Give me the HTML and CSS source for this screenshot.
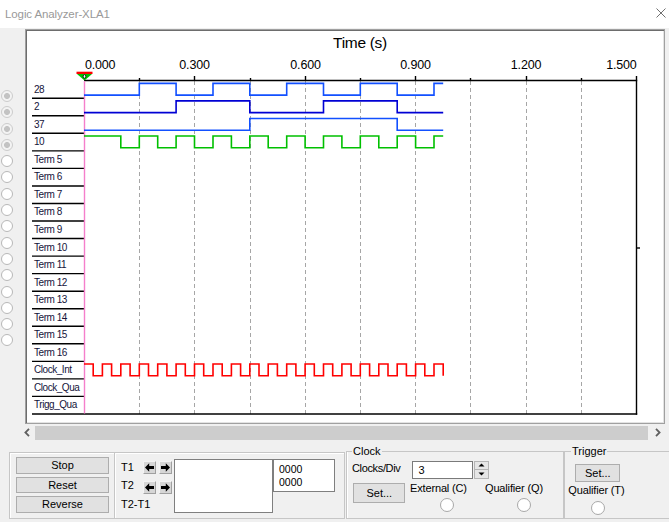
FILE: index.html
```html
<!DOCTYPE html>
<html>
<head>
<meta charset="utf-8">
<title>Logic Analyzer-XLA1</title>
<link rel="stylesheet" href="styles.css">
</head>
<body>
<div class="titlebar">
  <span class="title">Logic Analyzer-XLA1</span>
  <svg class="close" width="10" height="10" viewBox="0 0 10 10"><path d="M0.5 0.5L9.5 9.5M9.5 0.5L0.5 9.5" stroke="#707070" stroke-width="1" fill="none"/></svg>
</div>

<div class="main">
  <div class="radios">
    <div class="slot"><span class="rb on"></span></div>
    <div class="slot"><span class="rb on"></span></div>
    <div class="slot"><span class="rb on"></span></div>
    <div class="slot"><span class="rb on"></span></div>
    <div class="slot"><span class="rb"></span></div>
    <div class="slot"><span class="rb"></span></div>
    <div class="slot"><span class="rb"></span></div>
    <div class="slot"><span class="rb"></span></div>
    <div class="slot"><span class="rb"></span></div>
    <div class="slot"><span class="rb"></span></div>
    <div class="slot"><span class="rb"></span></div>
    <div class="slot"><span class="rb"></span></div>
    <div class="slot"><span class="rb"></span></div>
    <div class="slot"><span class="rb"></span></div>
    <div class="slot"><span class="rb"></span></div>
    <div class="slot"><span class="rb"></span></div>
  </div>

  <div class="panel">
    <svg class="chart" width="636" height="391" viewBox="27 31 636 391">
      <text class="ttl" x="360" y="47.5" text-anchor="middle">Time (s)</text>
      <g class="ticklbl">
        <text x="85" y="69">0.000</text>
        <text x="194.5" y="69" text-anchor="middle">0.300</text>
        <text x="305.5" y="69" text-anchor="middle">0.600</text>
        <text x="415.5" y="69" text-anchor="middle">0.900</text>
        <text x="526" y="69" text-anchor="middle">1.200</text>
        <text x="636.5" y="69" text-anchor="end">1.500</text>
      </g>
      <g stroke="#a6a6a6" stroke-width="1" stroke-dasharray="4 3" fill="none">
        <line x1="139.5" y1="81" x2="139.5" y2="414"/>
        <line x1="194.5" y1="81" x2="194.5" y2="414"/>
        <line x1="250.5" y1="81" x2="250.5" y2="414"/>
        <line x1="305.5" y1="81" x2="305.5" y2="414"/>
        <line x1="360.5" y1="81" x2="360.5" y2="414"/>
        <line x1="415.5" y1="81" x2="415.5" y2="414"/>
        <line x1="470.5" y1="81" x2="470.5" y2="414"/>
        <line x1="526.5" y1="81" x2="526.5" y2="414"/>
        <line x1="581.5" y1="81" x2="581.5" y2="414"/>
      </g>
      <g stroke="#000" stroke-width="1.4" fill="none">
        <line x1="84" y1="80.5" x2="637.2" y2="80.5"/>
        <line x1="139.5" y1="78" x2="139.5" y2="80.5"/>
        <line x1="194.5" y1="76" x2="194.5" y2="80.5"/>
        <line x1="250.5" y1="78" x2="250.5" y2="80.5"/>
        <line x1="305.5" y1="76" x2="305.5" y2="80.5"/>
        <line x1="360.5" y1="78" x2="360.5" y2="80.5"/>
        <line x1="415.5" y1="76" x2="415.5" y2="80.5"/>
        <line x1="470.5" y1="78" x2="470.5" y2="80.5"/>
        <line x1="526.5" y1="76" x2="526.5" y2="80.5"/>
        <line x1="581.5" y1="78" x2="581.5" y2="80.5"/>
        <line x1="636.5" y1="76" x2="636.5" y2="414.7"/>
        <line x1="636.5" y1="248" x2="640" y2="248"/>
        <line x1="32" y1="414" x2="637.2" y2="414"/>
        <line x1="32" y1="98.24" x2="84" y2="98.24"/>
        <line x1="32" y1="115.78" x2="84" y2="115.78"/>
        <line x1="32" y1="133.32" x2="84" y2="133.32"/>
        <line x1="32" y1="150.86" x2="84" y2="150.86"/>
        <line x1="32" y1="168.4" x2="84" y2="168.4"/>
        <line x1="32" y1="185.94" x2="84" y2="185.94"/>
        <line x1="32" y1="203.48" x2="84" y2="203.48"/>
        <line x1="32" y1="221.02" x2="84" y2="221.02"/>
        <line x1="32" y1="238.56" x2="84" y2="238.56"/>
        <line x1="32" y1="256.1" x2="84" y2="256.1"/>
        <line x1="32" y1="273.64" x2="84" y2="273.64"/>
        <line x1="32" y1="291.18" x2="84" y2="291.18"/>
        <line x1="32" y1="308.72" x2="84" y2="308.72"/>
        <line x1="32" y1="326.26" x2="84" y2="326.26"/>
        <line x1="32" y1="343.8" x2="84" y2="343.8"/>
        <line x1="32" y1="361.34" x2="84" y2="361.34"/>
        <line x1="32" y1="378.88" x2="84" y2="378.88"/>
        <line x1="32" y1="396.42" x2="84" y2="396.42"/>
      </g>
      <line x1="84.5" y1="81" x2="84.5" y2="413.5" stroke="#f57fcb" stroke-width="1.4"/>
      <g fill="none" stroke-width="1.6">
        <path stroke="#1250ff" d="M84 95.1H139.3V83.4H176.1V95.1H213V83.4H249.8V95.1H286.7V83.4H323.5V95.1H360.3V83.4H397.2V95.1H434V83.4H443.2"/>
        <path stroke="#0000d4" d="M84 112.6H176.1V100.9H249.8V112.6H323.5V100.9H397.2V112.6H443.2"/>
        <path stroke="#1250ff" d="M84 130.2H249.8V118.5H397.2V130.2H443.2"/>
        <path stroke="#00c000" d="M84 136H120.8V147.7H139.3V136H157.7V147.7H176.1V136H194.5V147.7H213V136H231.4V147.7H249.8V136H268.2V147.7H286.7V136H305.1V147.7H323.5V136H341.9V147.7H360.3V136H378.8V147.7H397.2V136H415.6V147.7H434V136H443.2"/>
        <path stroke="#ff0000" d="M84 364H93.2V375.7H102.4V364H111.6V375.7H120.8V364H130.1V375.7H139.3V364H148.5V375.7H157.7V364H166.9V375.7H176.1V364H185.3V375.7H194.5V364H203.7V375.7H213V364H222.2V375.7H231.4V364H240.6V375.7H249.8V364H259V375.7H268.2V364H277.4V375.7H286.7V364H295.9V375.7H305.1V364H314.3V375.7H323.5V364H332.7V375.7H341.9V364H351.1V375.7H360.3V364H369.6V375.7H378.8V364H388V375.7H397.2V364H406.4V375.7H415.6V364H424.8V375.7H434V364H443.2V375.7"/>
      </g>
      <rect x="76.5" y="71.7" width="16" height="2.3" fill="#ff0000"/>
      <polygon points="77,74 92,74 84.5,80.5" fill="#00c000"/>
      <ellipse cx="84.5" cy="76.4" rx="1.3" ry="1.8" fill="#fff" stroke="#000" stroke-width="0.8"/>
      <g class="lbl">
        <text x="34" y="92.7">28</text>
        <text x="34" y="110.24">2</text>
        <text x="34" y="127.78">37</text>
        <text x="34" y="145.32">10</text>
        <text x="34" y="162.86">Term 5</text>
        <text x="34" y="180.4">Term 6</text>
        <text x="34" y="197.94">Term 7</text>
        <text x="34" y="215.48">Term 8</text>
        <text x="34" y="233.02">Term 9</text>
        <text x="34" y="250.56">Term 10</text>
        <text x="34" y="268.1">Term 11</text>
        <text x="34" y="285.64">Term 12</text>
        <text x="34" y="303.18">Term 13</text>
        <text x="34" y="320.72">Term 14</text>
        <text x="34" y="338.26">Term 15</text>
        <text x="34" y="355.8">Term 16</text>
        <text x="34" y="373.34">Clock_Int</text>
        <text x="34" y="390.88">Clock_Qua</text>
        <text x="34" y="408.42">Trigg_Qua</text>
      </g>
    </svg>
  </div>
</div>

<div class="hscroll">
  <div class="sb-btn"><svg width="6" height="9" viewBox="0 0 6 9"><path d="M5 0.8L1.4 4.5L5 8.2" stroke="#606060" stroke-width="1.8" fill="none"/></svg></div>
  <div class="sb-track"></div>
  <div class="sb-btn right"><svg width="6" height="9" viewBox="0 0 6 9"><path d="M1 0.8L4.6 4.5L1 8.2" stroke="#606060" stroke-width="1.8" fill="none"/></svg></div>
</div>

<div class="controls">
  <div class="box btnbox">
    <button class="btn run">Stop</button>
    <button class="btn run">Reset</button>
    <button class="btn run">Reverse</button>
  </div>

  <div class="box cursors">
    <div class="tlabels">
      <span>T1</span>
      <span>T2</span>
      <span>T2-T1</span>
    </div>
    <div class="tarrows">
      <div class="arow">
        <span class="abtn"><svg width="11" height="11" viewBox="0 0 11 11"><polygon points="1,5.5 5.2,1.3 5.2,4 10,4 10,7 5.2,7 5.2,9.7" fill="#000"/></svg></span>
        <span class="abtn"><svg width="11" height="11" viewBox="0 0 11 11"><polygon points="10,5.5 5.8,1.3 5.8,4 1,4 1,7 5.8,7 5.8,9.7" fill="#000"/></svg></span>
      </div>
      <div class="arow">
        <span class="abtn"><svg width="11" height="11" viewBox="0 0 11 11"><polygon points="1,5.5 5.2,1.3 5.2,4 10,4 10,7 5.2,7 5.2,9.7" fill="#000"/></svg></span>
        <span class="abtn"><svg width="11" height="11" viewBox="0 0 11 11"><polygon points="10,5.5 5.8,1.3 5.8,4 1,4 1,7 5.8,7 5.8,9.7" fill="#000"/></svg></span>
      </div>
    </div>
    <div class="tbox big"></div>
    <div class="tbox small">0000<br>0000</div>
  </div>

  <fieldset class="clock">
    <legend>Clock</legend>
    <div class="clk-row1">
      <span class="clk-lbl">Clocks/Div</span>
      <div class="num">3</div>
      <div class="spin">
        <span class="spin-btn"><svg width="7" height="4" viewBox="0 0 7 4"><polygon points="0.5,3.5 3.5,0.5 6.5,3.5" fill="#000"/></svg></span>
        <span class="spin-btn"><svg width="7" height="4" viewBox="0 0 7 4"><polygon points="0.5,0.5 6.5,0.5 3.5,3.5" fill="#000"/></svg></span>
      </div>
    </div>
    <div class="clk-row2">
      <button class="btn set">Set...</button>
      <div class="opt ext"><span class="opt-lbl">External (C)</span><span class="rdo"></span></div>
      <div class="opt qual"><span class="opt-lbl">Qualifier (Q)</span><span class="rdo"></span></div>
    </div>
  </fieldset>

  <fieldset class="trigger">
    <legend>Trigger</legend>
    <button class="btn tset">Set...</button>
    <div class="opt tq"><span class="opt-lbl">Qualifier (T)</span><span class="rdo"></span></div>
  </fieldset>
</div>
</body>
</html>
```

FILE: styles.css
```css
* { box-sizing: border-box; }
html, body { margin: 0; padding: 0; }
body {
  width: 669px;
  height: 522px;
  overflow: hidden;
  background: #f0f0f0;
  font-family: "Liberation Sans", Arial, sans-serif;
  font-size: 11px;
  color: #000;
}

/* title bar */
.titlebar {
  height: 28px;
  background: #fff;
  display: flex;
  align-items: flex-start;
  justify-content: space-between;
  padding: 0 3.5px 0 5px;
}
.title {
  font-size: 11.5px;
  letter-spacing: -0.1px;
  line-height: 28px;
  color: #999;
}
.close { margin-top: 8px; display: block; }

/* main area */
.main { display: flex; height: 396px; }
.radios {
  width: 25px;
  display: flex;
  flex-direction: column;
  padding-top: 59.85px;
}
.slot { height: 16.3px; display: flex; align-items: center; flex: none; }
.rb {
  width: 12px;
  height: 12px;
  margin-left: 0.5px;
  border-radius: 50%;
  border: 1px solid #b8b8b8;
  background: #fff;
}
.rb.on {
  border-color: #cccccc;
  background: radial-gradient(circle, #c3c3c3 0 2.7px, #f3f3f3 3.2px);
}

.panel {
  margin-top: 1px;
  width: 640px;
  height: 395px;
  padding: 1px;
  border: 1px solid #a0a0a0;
  background: #fff;
  box-shadow: inset 1px 1px 0 #6d6d6d, inset -1px -1px 0 #e3e3e3;
}
.chart { display: block; }
.chart .ttl { font-size: 15.5px; letter-spacing: -0.3px; fill: #000; }
.chart .ticklbl text { font-size: 12.5px; letter-spacing: -0.2px; fill: #000; }
.chart .lbl text { font-size: 10px; letter-spacing: -0.45px; fill: #14143a; }

/* horizontal scrollbar */
.hscroll {
  margin: 2px 0 0 19px;
  width: 648px;
  height: 13.5px;
  display: flex;
}
.sb-btn { width: 16px; display: flex; align-items: center; justify-content: center; }
.sb-btn.right { width: 19px; }
.sb-btn svg { display: block; }
.sb-track { flex: 1; background: #cdcdcd; }

/* bottom controls */
.controls {
  display: flex;
  align-items: flex-end;
  margin: 5.7px 0 0 9px;
  height: 73.5px;
}
.box {
  height: 67px;
  border: 1px solid #c6c6c6;
  box-shadow: inset 1px 1px 0 #fff;
  flex: none;
}
.btn {
  font-family: "Liberation Sans", Arial, sans-serif;
  font-size: 11px;
  color: #000;
  background: #e1e1e1;
  border: 1px solid #adadad;
  padding: 0;
  margin: 0;
  line-height: 1;
  text-align: center;
}
.btnbox {
  width: 106px;
  padding: 4.6px 0 0 6px;
  display: flex;
  flex-direction: column;
  gap: 3px;
}
.btn.run { width: 93px; height: 16.5px; }

.cursors {
  width: 230px;
  border-left: none;
  display: flex;
  align-items: flex-start;
  padding: 6.3px 0 0 6px;
}
.tlabels {
  width: 22px;
  margin-top: 1.7px;
  display: flex;
  flex-direction: column;
  gap: 5.7px;
  line-height: 13px;
}
.tlabels span { white-space: nowrap; }
.tarrows {
  width: 31px;
  margin-top: 1.7px;
  display: flex;
  flex-direction: column;
  gap: 7px;
}
.arow { display: flex; gap: 3px; }
.abtn {
  width: 13px;
  height: 13px;
  display: flex;
  align-items: center;
  justify-content: center;
  background: #d6d6d6;
  border: 1px solid;
  border-color: #f4f4f4 #a0a0a0 #a0a0a0 #f4f4f4;
}
.abtn svg { display: block; }
.tbox { background: #fff; border: 1px solid #7f7f7f; flex: none; }
.tbox.big { width: 99px; height: 54px; }
.tbox.small {
  width: 62px;
  height: 33px;
  padding: 3px 5px;
  font-size: 10.5px;
  line-height: 12.6px;
}

fieldset {
  margin: 0;
  min-width: 0;
  height: 73.5px;
  border: 1px solid #c6c6c6;
  box-shadow: inset 1px 0 0 #fff;
  flex: none;
}
legend {
  padding: 0 1px;
  font-size: 11px;
  line-height: 13px;
}
.clock {
  width: 218px;
  margin-left: 1px;
  padding: 2.8px 0 0 5px;
}
.clk-row1 { display: flex; align-items: flex-start; height: 18px; }
.clk-lbl { width: 60px; line-height: 13px; margin-top: 1px; letter-spacing: -0.35px; }
.num {
  width: 61px;
  height: 18px;
  background: #fff;
  border: 1px solid #7a7a7a;
  padding-left: 5.5px;
  line-height: 16px;
}
.spin {
  margin-left: 1px;
  width: 15px;
  height: 18px;
  display: flex;
  flex-direction: column;
  gap: 0;
}
.spin-btn {
  height: 9px;
  display: flex;
  align-items: center;
  justify-content: center;
  background: #e6e6e6;
  border: 1px solid #b5b5b5;
}
.spin-btn + .spin-btn { border-top: none; }
.spin-btn svg { display: block; }
.clk-row2 { display: flex; align-items: flex-start; margin-top: 4px; }
.btn.set { width: 52px; height: 20px; margin-left: 1.3px; margin-top: 0.3px; }
.opt { display: flex; flex-direction: column; align-items: flex-start; }
.opt-lbl { line-height: 13px; white-space: nowrap; letter-spacing: -0.15px; }
.rdo {
  width: 14px;
  height: 14px;
  border-radius: 50%;
  border: 1px solid #a8a8a8;
  background: #fff;
}
.opt.ext { width: 57px; margin-left: 4.7px; margin-top: -1px; }
.opt.ext .rdo { margin: 3px 0 0 30px; }
.opt.qual { margin-left: 18px; margin-top: -1px; }
.opt.qual .rdo { margin: 3px 0 0 31.7px; }

.trigger {
  width: 110px;
  padding: 6.1px 0 0 6px;
  box-shadow: none;
}
.btn.tset { display: block; width: 45px; height: 18px; margin-left: 4.3px; }
.opt.tq { margin-left: -2.7px; margin-top: 1.3px; }
.opt.tq .rdo { margin: 4px 0 0 22.4px; }
```
